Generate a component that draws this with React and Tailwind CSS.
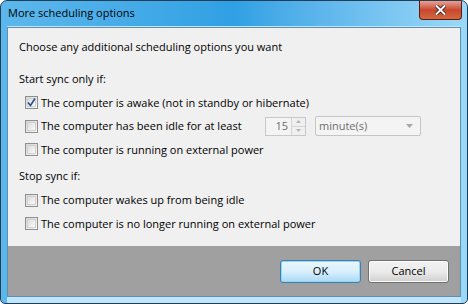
import React from 'react';

function CheckBox({ checked }) {
  return (
    <span className="flex h-[13px] w-[13px] shrink-0 items-center justify-center border border-[#8e8f8f] bg-gradient-to-br from-[#d6d6d6] to-[#f8f8f8]">
      <span className="flex h-[9px] w-[9px] items-center justify-center border border-[#d0d0d0] bg-gradient-to-br from-[#dcdcdc] to-[#fbfbfb]">
        {checked && (
          <svg width="9" height="9" viewBox="0 0 9 9" className="overflow-visible">
            <path d="M1 4.5 L3.5 7.5 L8 0.5" fill="none" stroke="#2c4d8c" strokeWidth="1.6" />
          </svg>
        )}
      </span>
    </span>
  );
}

function Option({ checked, label, children }) {
  return (
    <div className="flex h-[23.5px] items-center whitespace-nowrap">
      <div className={'flex items-center gap-[3px] ' + (children ? 'w-[240px]' : '')}>
        <CheckBox checked={checked} />
        <span>{label}</span>
      </div>
      {children}
    </div>
  );
}

export default function App() {
  return (
    <div
      className="flex h-[304px] w-[468px] flex-col overflow-hidden rounded-t-[7px] rounded-b-[5px] border border-[#253e57] bg-gradient-to-r from-[#5cb8ec] via-[#2fa0e4] to-[#9bd9f8] text-[11px] text-black"
      style={{ fontFamily: '"Open Sans", "Liberation Sans", sans-serif' }}
    >
      <div className="flex h-[25px] shrink-0 items-start justify-between pl-[7px]">
        <span className="mt-[4px] text-[11px] text-black">More scheduling options</span>
        <button className="mr-[5px] flex h-[19px] w-[43px] items-center justify-center rounded-b-[4px] border border-t-0 border-[#5a1b14] bg-gradient-to-b from-[#e8a193] via-[#c8462f] to-[#d5683c] text-[13px] font-bold text-white">
          <svg width="11" height="10" viewBox="0 0 11 10">
            <path d="M1.5 1 L9.5 9 M9.5 1 L1.5 9" stroke="#3b1410" strokeWidth="3.6" strokeLinecap="square" />
            <path d="M1.5 1 L9.5 9 M9.5 1 L1.5 9" stroke="#ffffff" strokeWidth="2" strokeLinecap="square" />
          </svg>
        </button>
      </div>
      <div className="mx-[6px] flex flex-1 flex-col rounded-[1px] bg-[#bfe6fb] pb-[6px] pt-[1px]">
        <div className="flex flex-1 flex-col border border-[#5f8fb2]">
          <div className="flex h-[218px] flex-col bg-[#f0f0f0] pl-[11px] pt-[11px]">
            <div className="h-[18px]">Choose any additional scheduling options you want</div>
            <div className="mt-[14px] h-[18px]">Start sync only if:</div>
            <div className="mt-[2px] flex flex-col pl-[6px]">
              <Option checked label="The computer is awake (not in standby or hibernate)" />
              <Option label="The computer has been idle for at least">
                <div className="flex h-[19px] w-[41px] items-center justify-between border border-[#c8c8c8] bg-[#f4f4f4] pl-[3px]">
                  <span className="ml-auto mr-[3px] text-[#6d6d6d]">15</span>
                  <div className="flex h-full w-[14px] flex-col border-l border-[#d4d4d4]">
                    <div className="flex flex-1 items-center justify-center border-b border-[#d4d4d4] bg-[#f0f0f0]">
                      <svg width="5" height="3" viewBox="0 0 5 3"><path d="M0 3 L2.5 0 L5 3 Z" fill="#b4b4b4" /></svg>
                    </div>
                    <div className="flex flex-1 items-center justify-center bg-[#f0f0f0]">
                      <svg width="5" height="3" viewBox="0 0 5 3"><path d="M0 0 L2.5 3 L5 0 Z" fill="#b4b4b4" /></svg>
                    </div>
                  </div>
                </div>
                <div className="ml-[9px] flex h-[20px] w-[106px] items-center justify-between rounded-[2px] border border-[#c5c5c5] bg-[#f4f4f4] pl-[3px] pr-[7px] text-[#6d6d6d]">
                  <span>minute(s)</span>
                  <svg width="7" height="4" viewBox="0 0 7 4"><path d="M0 0 L3.5 4 L7 0 Z" fill="#a8a8a8" /></svg>
                </div>
              </Option>
              <Option label="The computer is running on external power" />
            </div>
            <div className="mt-[6px] h-[18px]">Stop sync if:</div>
            <div className="mt-[3px] flex flex-col pl-[6px]">
              <Option label="The computer wakes up from being idle" />
              <Option label="The computer is no longer running on external power" />
            </div>
          </div>
          <div className="flex flex-1 items-start justify-end gap-[7px] bg-[#a0a0a0] pr-[11px] pt-[14px]">
            <button className="flex h-[23px] w-[81px] items-center justify-center rounded-[3px] border border-[#3c7fb1] bg-gradient-to-b from-[#eaf6fd] via-[#d9f0fc] to-[#a7d9f5] shadow-[inset_0_0_0_1px_#97d4f6] text-[11px]">
              OK
            </button>
            <button className="flex h-[23px] w-[81px] items-center justify-center rounded-[3px] border border-[#707070] bg-gradient-to-b from-[#f2f2f2] via-[#ebebeb] to-[#cfcfcf] shadow-[inset_0_0_0_1px_#fcfcfc] text-[11px]">
              Cancel
            </button>
          </div>
        </div>
      </div>
    </div>
  );
}
